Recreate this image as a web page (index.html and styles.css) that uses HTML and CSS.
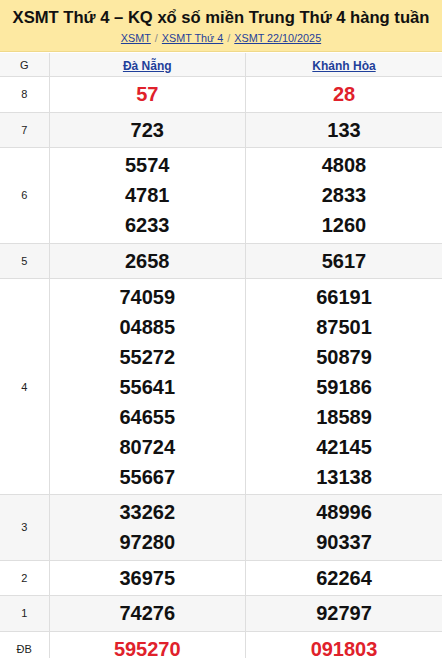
FILE: index.html
```html
<!DOCTYPE html>
<html lang="vi">
<head>
<meta charset="utf-8">
<title>XSMT Thứ 4</title>
<link rel="stylesheet" href="styles.css">
</head>
<body>
<div class="head">
  <h1 class="title">XSMT Thứ 4 – KQ xổ số miền Trung Thứ 4 hàng tuần</h1>
  <div class="crumbs"><a href="#">XSMT</a><span class="sep">/</span><a href="#">XSMT Thứ 4</a><span class="sep">/</span><a href="#">XSMT 22/10/2025</a></div>
</div>
<table class="kq">
  <colgroup><col class="c-g"><col class="c-p"><col class="c-p"></colgroup>
  <tr class="hd">
    <td class="g">G</td>
    <td class="prov"><a href="#">Đà Nẵng</a></td>
    <td class="prov"><a href="#">Khánh Hòa</a></td>
  </tr>
  <tr>
    <td class="g">8</td>
    <td class="n red"><div>57</div></td>
    <td class="n red"><div>28</div></td>
  </tr>
  <tr class="alt">
    <td class="g">7</td>
    <td class="n"><div>723</div></td>
    <td class="n"><div>133</div></td>
  </tr>
  <tr>
    <td class="g">6</td>
    <td class="n"><div>5574</div><div>4781</div><div>6233</div></td>
    <td class="n"><div>4808</div><div>2833</div><div>1260</div></td>
  </tr>
  <tr class="alt">
    <td class="g">5</td>
    <td class="n"><div>2658</div></td>
    <td class="n"><div>5617</div></td>
  </tr>
  <tr>
    <td class="g">4</td>
    <td class="n"><div>74059</div><div>04885</div><div>55272</div><div>55641</div><div>64655</div><div>80724</div><div>55667</div></td>
    <td class="n"><div>66191</div><div>87501</div><div>50879</div><div>59186</div><div>18589</div><div>42145</div><div>13138</div></td>
  </tr>
  <tr class="alt">
    <td class="g">3</td>
    <td class="n"><div>33262</div><div>97280</div></td>
    <td class="n"><div>48996</div><div>90337</div></td>
  </tr>
  <tr>
    <td class="g">2</td>
    <td class="n"><div>36975</div></td>
    <td class="n"><div>62264</div></td>
  </tr>
  <tr class="alt">
    <td class="g">1</td>
    <td class="n"><div>74276</div></td>
    <td class="n"><div>92797</div></td>
  </tr>
  <tr>
    <td class="g">ĐB</td>
    <td class="n red"><div>595270</div></td>
    <td class="n red"><div>091803</div></td>
  </tr>
</table>
</body>
</html>
```
FILE: styles.css
```css
html, body {
  margin: 0;
  padding: 0;
  background: #ffffff;
  font-family: "Liberation Sans", Arial, sans-serif;
  color: #111;
}
.head {
  background: #fde9a2;
  border-bottom: 1px solid #f0d98a;
  height: 52px;
  box-sizing: border-box;
  text-align: center;
  padding-top: 8px;
}
.title {
  margin: 0;
  font-size: 16.6px;
  line-height: 20px;
  font-weight: bold;
  color: #111;
}
.crumbs {
  margin-top: 3px;
  font-size: 10.8px;
  line-height: 14px;
  color: #777;
}
.crumbs a {
  color: #1f3f9a;
  text-decoration: underline;
}
.crumbs .sep {
  margin: 0 4px;
  color: #888;
}
.kq {
  width: 100%;
  border-collapse: collapse;
  table-layout: fixed;
  margin-top: 1px;
}
.c-g { width: 49px; }
.kq td {
  border: 1px solid #dedede;
  text-align: center;
  vertical-align: middle;
  padding: 2.3px 0;
}
.kq tr td:first-child { border-left: none; }
.kq tr td:last-child { border-right: none; }
.kq tr:first-child td { border-top: none; }
.kq .hd td {
  background: #f7f7f7;
  height: 19px;
  padding: 2px 0;
}
.kq tr.alt td { background: #f6f6f6; }
.g {
  font-size: 11px;
  color: #222;
}
.prov a {
  font-size: 12px;
  font-weight: bold;
  color: #1f3f9a;
  text-decoration: underline;
}
.n div {
  font-size: 20px;
  line-height: 30px;
  font-weight: bold;
  color: #111;
}
.n.red div {
  color: #e0212b;
  font-size: 20px;
}
```
